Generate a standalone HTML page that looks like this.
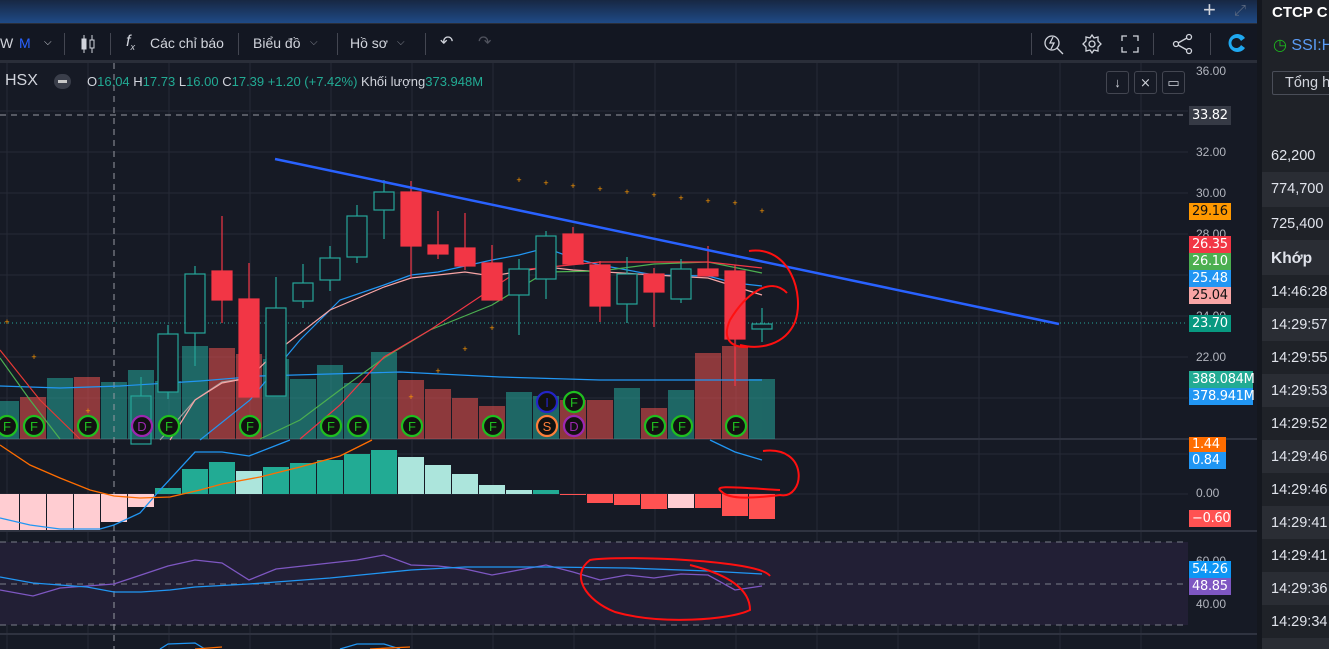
<!DOCTYPE html>
<html><head><meta charset="utf-8"><style>
*{margin:0;padding:0;box-sizing:border-box}
body{width:1329px;height:649px;overflow:hidden;background:#161a25;font-family:"Liberation Sans","Noto Sans CJK JP",sans-serif;position:relative}
.top{position:absolute;left:0;top:0;width:1257px;height:23px;background:linear-gradient(#172743,#1f4a86)}
.tb{position:absolute;left:0;top:23px;width:1257px;height:40px;background:#131722;border-top:1px solid #2a2e39;border-bottom:3px solid #2a2e39;color:#d1d4dc;font-size:14px}
.tb span{position:absolute;top:11px}
.sep{position:absolute;top:9px;width:1px;height:22px;background:#434651}
.rp{position:absolute;left:1257px;top:0;width:72px;height:649px;background:#2a2d34;color:#e0e3eb;font-size:14.5px}
.row{position:absolute;left:5px;width:67px;height:33px;padding:9px 0 0 9px}
.lbl{position:absolute;left:1189px;height:17px;font-size:13px;color:#fff;padding:1px 0 0 3px;font-family:"DejaVu Sans","Liberation Sans",sans-serif;letter-spacing:-0.3px}
.ax{position:absolute;left:1196px;font-size:12px;color:#b2b5be}
.btn{position:absolute;top:71px;width:23px;height:23px;border:1px solid #434651;border-radius:3px;color:#d1d4dc;font-size:13px;text-align:center;line-height:21px;background:#161a25}
</style></head><body>
<svg width="1257" height="649" style="position:absolute;left:0;top:0" xmlns="http://www.w3.org/2000/svg">
<rect x="0" y="63" width="1257" height="586" fill="#161a25"/>
<g stroke="#262a36" stroke-width="1">
<line x1="0" y1="111" x2="1188" y2="111"/><line x1="0" y1="152" x2="1188" y2="152"/><line x1="0" y1="193" x2="1188" y2="193"/><line x1="0" y1="234" x2="1188" y2="234"/><line x1="0" y1="275" x2="1188" y2="275"/><line x1="0" y1="316" x2="1188" y2="316"/><line x1="0" y1="357" x2="1188" y2="357"/><line x1="0" y1="398" x2="1188" y2="398"/>
<line x1="0" y1="454" x2="1188" y2="454"/><line x1="0" y1="494" x2="1188" y2="494"/>
<line x1="0" y1="564" x2="1188" y2="564"/><line x1="0" y1="604" x2="1188" y2="604"/>
<line x1="7" y1="63" x2="7" y2="649"/><line x1="88" y1="63" x2="88" y2="649"/><line x1="169" y1="63" x2="169" y2="649"/><line x1="250" y1="63" x2="250" y2="649"/><line x1="331" y1="63" x2="331" y2="649"/><line x1="412" y1="63" x2="412" y2="649"/><line x1="493" y1="63" x2="493" y2="649"/><line x1="574" y1="63" x2="574" y2="649"/><line x1="655" y1="63" x2="655" y2="649"/><line x1="736" y1="63" x2="736" y2="649"/><line x1="817" y1="63" x2="817" y2="649"/><line x1="898" y1="63" x2="898" y2="649"/><line x1="979" y1="63" x2="979" y2="649"/><line x1="1060" y1="63" x2="1060" y2="649"/><line x1="1141" y1="63" x2="1141" y2="649"/>
</g>
<g stroke="#2f3340" stroke-width="2"><line x1="0" y1="439" x2="1257" y2="439"/><line x1="0" y1="531" x2="1257" y2="531"/><line x1="0" y1="634" x2="1257" y2="634"/></g>
<rect x="0" y="542" width="1188" height="83" fill="#221f35"/>
<g stroke="#7b7e89" stroke-dasharray="6,5"><line x1="0" y1="542" x2="1188" y2="542"/><line x1="0" y1="584" x2="1188" y2="584"/><line x1="0" y1="625" x2="1188" y2="625"/><line x1="0" y1="115" x2="1188" y2="115" stroke="#9598a1"/></g>
<line x1="0" y1="323" x2="1188" y2="323" stroke="#26a69a" stroke-dasharray="1,3"/>
<g opacity="0.55">
<rect x="-7" y="401" width="26" height="38" fill="#26a69a"/><rect x="20" y="397" width="26" height="42" fill="#ef5350"/><rect x="47" y="378" width="26" height="61" fill="#26a69a"/><rect x="74" y="377" width="26" height="62" fill="#ef5350"/><rect x="101" y="382" width="26" height="57" fill="#26a69a"/><rect x="128" y="370" width="26" height="69" fill="#26a69a"/><rect x="155" y="381" width="26" height="58" fill="#26a69a"/><rect x="182" y="346" width="26" height="93" fill="#26a69a"/><rect x="209" y="348" width="26" height="91" fill="#ef5350"/><rect x="236" y="354" width="26" height="85" fill="#ef5350"/><rect x="263" y="359" width="26" height="80" fill="#26a69a"/><rect x="290" y="379" width="26" height="60" fill="#26a69a"/><rect x="317" y="365" width="26" height="74" fill="#26a69a"/><rect x="344" y="383" width="26" height="56" fill="#26a69a"/><rect x="371" y="352" width="26" height="87" fill="#26a69a"/><rect x="398" y="380" width="26" height="59" fill="#ef5350"/><rect x="425" y="389" width="26" height="50" fill="#ef5350"/><rect x="452" y="398" width="26" height="41" fill="#ef5350"/><rect x="479" y="406" width="26" height="33" fill="#ef5350"/><rect x="506" y="392" width="26" height="47" fill="#26a69a"/><rect x="533" y="396" width="26" height="43" fill="#26a69a"/><rect x="560" y="400" width="26" height="39" fill="#ef5350"/><rect x="587" y="400" width="26" height="39" fill="#ef5350"/><rect x="614" y="388" width="26" height="51" fill="#26a69a"/><rect x="641" y="408" width="26" height="31" fill="#ef5350"/><rect x="668" y="390" width="26" height="49" fill="#26a69a"/><rect x="695" y="353" width="26" height="86" fill="#ef5350"/><rect x="722" y="346" width="26" height="93" fill="#ef5350"/><rect x="749" y="379" width="26" height="60" fill="#26a69a"/>
</g>
<line x1="114" y1="63" x2="114" y2="649" stroke="#9598a1" stroke-dasharray="6,5"/>
<g fill="none" stroke-width="1.2">
<polyline stroke="#2196f3" points="0,386 60,388 120,386 200,381 260,376 400,372 500,377 600,380 700,380 762,380"/>
<polyline stroke="#e53935" points="0,350 40,400 80,439"/>
<polyline stroke="#4caf50" points="0,358 30,400 60,439"/>
<polyline stroke="#9e9e9e" points="160,440 195,400 222,382 249,378"/>
<polyline stroke="#2196f3" points="200,440 250,400 300,340 340,300 384,285 411,275 438,272 492,260 519,255 546,248 573,258 600,265 654,275 708,276 735,283 762,286"/>
<polyline stroke="#f8a5a5" points="170,440 195,400 222,383 249,378 276,352 330,310 384,287 411,278 465,272 492,276 546,267 573,270 654,275 708,278 762,295"/>
<polyline stroke="#4caf50" points="260,439 300,420 340,390 384,358 430,330 492,305 546,272 600,271 654,264 708,262 762,273"/>
<polyline stroke="#f23645" points="300,439 340,405 384,357 430,330 520,270 600,262 708,262 762,268"/>
</g>
<g stroke="#26a69a" stroke-width="1.2" fill="#161a25">
<line x1="141" y1="377" x2="141" y2="396"/><rect x="131" y="396" width="20" height="48" fill="none"/>
<line x1="168" y1="325" x2="168" y2="399"/><rect x="158" y="334" width="20" height="58"/>
<line x1="195" y1="266" x2="195" y2="366"/><rect x="185" y="274" width="20" height="59"/>
<line x1="276" y1="277" x2="276" y2="396"/><rect x="266" y="308" width="20" height="88"/>
<line x1="303" y1="264" x2="303" y2="308"/><rect x="293" y="283" width="20" height="18"/>
<line x1="330" y1="246" x2="330" y2="291"/><rect x="320" y="258" width="20" height="22"/>
<line x1="357" y1="205" x2="357" y2="263"/><rect x="347" y="216" width="20" height="41"/>
<line x1="384" y1="180" x2="384" y2="239"/><rect x="374" y="192" width="20" height="18"/>
<line x1="519" y1="259" x2="519" y2="335"/><rect x="509" y="269" width="20" height="26"/>
<line x1="546" y1="231" x2="546" y2="299"/><rect x="536" y="236" width="20" height="43"/>
<line x1="627" y1="257" x2="627" y2="323"/><rect x="617" y="274" width="20" height="30"/>
<line x1="681" y1="259" x2="681" y2="303"/><rect x="671" y="269" width="20" height="30"/>
<line x1="762" y1="308" x2="762" y2="342"/><rect x="752" y="324" width="20" height="5"/>
</g>
<g fill="#f23645" stroke="#f23645" stroke-width="1.2">
<line x1="222" y1="216" x2="222" y2="323"/><rect x="212" y="271" width="20" height="29"/>
<line x1="249" y1="263" x2="249" y2="397"/><rect x="239" y="299" width="20" height="98"/>
<line x1="411" y1="181" x2="411" y2="278"/><rect x="401" y="192" width="20" height="54"/>
<line x1="438" y1="211" x2="438" y2="259"/><rect x="428" y="245" width="20" height="9"/>
<line x1="465" y1="213" x2="465" y2="270"/><rect x="455" y="248" width="20" height="18"/>
<line x1="492" y1="245" x2="492" y2="300"/><rect x="482" y="263" width="20" height="37"/>
<line x1="573" y1="227" x2="573" y2="264"/><rect x="563" y="234" width="20" height="30"/>
<line x1="600" y1="261" x2="600" y2="322"/><rect x="590" y="265" width="20" height="41"/>
<line x1="654" y1="268" x2="654" y2="327"/><rect x="644" y="274" width="20" height="18"/>
<line x1="708" y1="246" x2="708" y2="276"/><rect x="698" y="269" width="20" height="7"/>
<line x1="735" y1="265" x2="735" y2="386"/><rect x="725" y="271" width="20" height="68"/>
</g>
<line x1="275" y1="159" x2="1059" y2="324" stroke="#2962ff" stroke-width="2.5"/>
<g fill="#ff9800" font-size="9" font-family="Liberation Sans" text-anchor="middle">
<text x="7" y="325">+</text><text x="34" y="360">+</text><text x="88" y="414">+</text><text x="411" y="400">+</text><text x="438" y="374">+</text><text x="465" y="352">+</text><text x="492" y="331">+</text><text x="519" y="183">+</text><text x="546" y="186">+</text><text x="573" y="189">+</text><text x="600" y="192">+</text><text x="627" y="195">+</text><text x="654" y="198">+</text><text x="681" y="201">+</text><text x="708" y="204">+</text><text x="735" y="206">+</text><text x="762" y="214">+</text>
</g>
<g font-size="13" font-family="Liberation Sans" text-anchor="middle" stroke-width="2.2">
<g fill="#111" stroke="#1fbf1f"><circle cx="7" cy="426" r="10"/><circle cx="34" cy="426" r="10"/><circle cx="88" cy="426" r="10"/><circle cx="169" cy="426" r="10"/><circle cx="250" cy="426" r="10"/><circle cx="331" cy="426" r="10"/><circle cx="358" cy="426" r="10"/><circle cx="412" cy="426" r="10"/><circle cx="493" cy="426" r="10"/><circle cx="655" cy="426" r="10"/><circle cx="682" cy="426" r="10"/><circle cx="736" cy="426" r="10"/><circle cx="574" cy="402" r="10"/></g>
<g fill="#111" stroke="#9c27b0"><circle cx="142" cy="426" r="10"/><circle cx="574" cy="426" r="10"/></g>
<circle cx="547" cy="402" r="10" fill="#111" stroke="#2424c8"/><circle cx="547" cy="426" r="10" fill="#111" stroke="#ff7f3a"/>
<g fill="#1fbf1f" stroke="none"><text x="7" y="431">F</text><text x="34" y="431">F</text><text x="88" y="431">F</text><text x="169" y="431">F</text><text x="250" y="431">F</text><text x="331" y="431">F</text><text x="358" y="431">F</text><text x="412" y="431">F</text><text x="493" y="431">F</text><text x="655" y="431">F</text><text x="682" y="431">F</text><text x="736" y="431">F</text><text x="574" y="407">F</text></g>
<g fill="#9c27b0" stroke="none"><text x="142" y="431">D</text><text x="574" y="431">D</text></g>
<text x="547" y="407" fill="#2424c8" stroke="none">I</text><text x="547" y="431" fill="#ff7f3a" stroke="none">S</text>
</g>
<g>
<g fill="#ffcdd2"><rect x="0" y="494" width="19" height="36"/><rect x="20" y="494" width="26" height="36"/><rect x="47" y="494" width="26" height="36"/><rect x="74" y="494" width="26" height="36"/><rect x="101" y="494" width="26" height="28"/><rect x="128" y="494" width="26" height="13"/><rect x="668" y="494" width="26" height="14"/></g>
<g fill="#22ab94"><rect x="155" y="488" width="26" height="6"/><rect x="182" y="469" width="26" height="25"/><rect x="209" y="462" width="26" height="32"/><rect x="263" y="467" width="26" height="27"/><rect x="290" y="463" width="26" height="31"/><rect x="317" y="460" width="26" height="34"/><rect x="344" y="454" width="26" height="40"/><rect x="371" y="450" width="26" height="44"/><rect x="533" y="490" width="26" height="4"/></g>
<g fill="#ace5dc"><rect x="236" y="471" width="26" height="23"/><rect x="398" y="457" width="26" height="37"/><rect x="425" y="465" width="26" height="29"/><rect x="452" y="474" width="26" height="20"/><rect x="479" y="485" width="26" height="9"/><rect x="506" y="490" width="26" height="4"/></g>
<g fill="#ff5252"><rect x="560" y="494" width="26" height="1"/><rect x="587" y="494" width="26" height="9"/><rect x="614" y="494" width="26" height="11"/><rect x="641" y="494" width="26" height="15"/><rect x="695" y="494" width="26" height="14"/><rect x="722" y="494" width="26" height="22"/><rect x="749" y="494" width="26" height="25"/></g>
</g>
<g fill="none" stroke-width="1.3">
<polyline stroke="#2196f3" points="0,518 30,525 60,529 100,529 114,525 140,513 160,490 195,452 222,452 249,456 290,440"/>
<polyline stroke="#2196f3" points="710,440 735,452 762,460"/>
<polyline stroke="#ff6d00" points="0,445 30,465 60,478 90,490 114,496 140,498 170,497 200,490 222,484 260,477 300,467 340,456 372,440"/>
<polyline stroke="#7e57c2" points="0,590 33,596 60,588 87,586 114,584 141,575 168,566 195,560 222,563 249,580 276,569 303,566 330,563 357,560 384,555 411,565 438,566 465,569 492,575 519,570 546,565 573,572 600,580 627,575 654,578 681,574 708,575 735,590 762,586"/>
<polyline stroke="#2196f3" points="0,577 33,583 87,587 114,592 141,592 170,590 195,587 249,584 330,578 411,570 465,567 546,567 627,568 708,571 762,574"/>
<polyline stroke="#2196f3" points="160,649 168,644 195,643 205,649"/>
<polyline stroke="#ff6d00" points="195,649 222,647"/>
<polyline stroke="#2196f3" points="340,649 357,644 384,644 400,649"/>
<polyline stroke="#ff6d00" points="370,649 410,647"/>
</g>
<g fill="none" stroke="#ff1010" stroke-width="2">
<path d="M749,251 C790,245 805,295 795,322 C785,345 760,350 740,345"/>
<path d="M787,293 C770,275 745,295 730,320 C722,338 730,348 748,347"/>
<path d="M763,451 C810,445 805,500 780,495 C755,498 730,500 722,492 C712,485 730,487 780,490"/>
<path d="M770,576 C760,560 620,555 590,560 C570,575 585,600 615,612 C660,625 730,620 750,610 C750,590 730,575 690,565"/>
</g>
</svg>

<div class="top"></div>
<div style="position:absolute;left:1203px;top:-3px;color:#d1d4dc;font-size:22px">+</div>
<div style="position:absolute;left:1234px;top:2px;color:#5d6a80;font-size:15px">⤢</div>
<div class="tb">
<span style="left:0">W</span><span style="left:19px;color:#2962ff">M</span><span style="left:44px;font-size:10px;top:13px">⌵</span>
<div class="sep" style="left:64px"></div>
<svg style="position:absolute;left:80px;top:10px" width="16" height="20"><g stroke="#d1d4dc" fill="none"><line x1="4" y1="1" x2="4" y2="19"/><rect x="2" y="5" width="4" height="10" fill="#d1d4dc"/><line x1="12" y1="1" x2="12" y2="19"/><rect x="10" y="6" width="4" height="8" fill="#131722"/></g></svg>
<div class="sep" style="left:110px"></div>
<span style="left:126px;font-style:italic;font-size:16px;top:9px">f<sub style="font-size:9px">x</sub></span>
<span style="left:150px">Các chỉ báo</span>
<div class="sep" style="left:238px"></div>
<span style="left:253px">Biểu đồ</span><span style="left:310px;font-size:10px;top:13px;color:#868993">⌵</span>
<div class="sep" style="left:337px"></div>
<span style="left:350px">Hồ sơ</span><span style="left:397px;font-size:10px;top:13px;color:#868993">⌵</span>
<div class="sep" style="left:425px"></div>
<span style="left:440px;font-size:16px;top:8px">↶</span><span style="left:478px;font-size:16px;top:8px;color:#50535e">↷</span>
<div class="sep" style="left:1031px"></div>
<svg style="position:absolute;left:1043px;top:9px" width="22" height="22"><g stroke="#d1d4dc" fill="none" stroke-width="1.3"><circle cx="9" cy="10" r="7"/><line x1="14" y1="15" x2="20" y2="21"/><path d="M10,4 L7,10 L11,10 L8,16"/></g></svg>
<svg style="position:absolute;left:1081px;top:9px" width="22" height="22"><g stroke="#d1d4dc" fill="none" stroke-width="1.3"><circle cx="11" cy="11" r="3"/><path d="M11,2 L13,5 L17,4 L17,8 L20,11 L17,14 L17,18 L13,17 L11,20 L9,17 L5,18 L5,14 L2,11 L5,8 L5,4 L9,5 Z"/></g></svg>
<svg style="position:absolute;left:1121px;top:11px" width="18" height="18"><g stroke="#d1d4dc" fill="none" stroke-width="1.3"><path d="M1,6 V1 H6 M12,1 H17 V6 M17,12 V17 H12 M6,17 H1 V12"/></g></svg>
<div class="sep" style="left:1153px"></div>
<svg style="position:absolute;left:1172px;top:9px" width="22" height="22"><g stroke="#d1d4dc" fill="none" stroke-width="1.3"><circle cx="17" cy="4" r="2.5"/><circle cx="4" cy="11" r="2.5"/><circle cx="17" cy="18" r="2.5"/><line x1="6" y1="10" x2="15" y2="5"/><line x1="6" y1="12" x2="15" y2="17"/></g></svg>
<div class="sep" style="left:1210px"></div>
<svg style="position:absolute;left:1226px;top:8px" width="22" height="22"><path d="M19,6 A9,9 0 1 0 19,16 L15,13 A5,5 0 1 1 15,9 Z" fill="#1fa8f0"/></svg>
</div>

<div style="position:absolute;left:5px;top:72px;color:#d1d4dc;font-size:16px">HSX</div>
<div style="position:absolute;left:54px;top:74px;width:17px;height:15px;border-radius:8px;background:#3a3e4a"><div style="margin:6px 4px;height:3px;background:#c8c8c8"></div></div>
<div style="position:absolute;left:87px;top:74px;font-size:13px;color:#d1d4dc;white-space:nowrap">O<span style="color:#22ab94">16.04</span> H<span style="color:#22ab94">17.73</span> L<span style="color:#22ab94">16.00</span> C<span style="color:#22ab94">17.39</span> <span style="color:#22ab94">+1.20 (+7.42%)</span> Khối lượng<span style="color:#22ab94">373.948M</span></div>
<div class="btn" style="left:1106px">↓</div><div class="btn" style="left:1134px">⨯</div><div class="btn" style="left:1162px">▭</div>

<div class="ax" style="top:64px">36.00</div><div class="ax" style="top:145px">32.00</div><div class="ax" style="top:186px">30.00</div><div class="ax" style="top:227px">28.00</div><div class="ax" style="top:309px">24.00</div><div class="ax" style="top:350px">22.00</div><div class="ax" style="top:486px">0.00</div><div class="ax" style="top:554px">60.00</div><div class="ax" style="top:597px">40.00</div>
<div class="lbl" style="top:106px;width:42px;background:#363a45;height:19px;padding-top:2px">33.82</div>
<div class="lbl" style="top:203px;width:42px;background:#ff9800;color:#111">29.16</div>
<div class="lbl" style="top:236px;width:42px;background:#f23645">26.35</div>
<div class="lbl" style="top:253px;width:42px;background:#4caf50">26.10</div>
<div class="lbl" style="top:270px;width:42px;background:#2196f3">25.48</div>
<div class="lbl" style="top:287px;width:42px;background:#f8a5a5;color:#111">25.04</div>
<div class="lbl" style="top:315px;width:42px;background:#089981">23.70</div>
<div class="lbl" style="top:371px;width:64px;background:#22ab94">388.084M</div>
<div class="lbl" style="top:388px;width:64px;background:#2196f3">378.941M</div>
<div class="lbl" style="top:437px;width:37px;background:#ff6d00;height:15px;padding-top:0">1.44</div>
<div class="lbl" style="top:452px;width:37px;background:#2196f3">0.84</div>
<div class="lbl" style="top:510px;width:42px;background:#ff5252">−0.60</div>
<div class="lbl" style="top:561px;width:42px;background:#0e96f5">54.26</div>
<div class="lbl" style="top:578px;width:42px;background:#7e57c2">48.85</div>

<div class="rp">
<div style="position:absolute;left:0;top:0;width:72px;height:139px;background:#1f2228"></div>
<div style="position:absolute;left:15px;top:4px;font-weight:bold;font-size:15px;color:#fff;white-space:nowrap">CTCP C</div>
<div style="position:absolute;left:16px;top:35px;font-size:16px;color:#5b9cf5;white-space:nowrap"><span style="color:#1db51d">◷</span> SSI:H</div>
<div style="position:absolute;left:15px;top:71px;width:60px;height:24px;border:1px solid #4a4e58;border-radius:2px;color:#d1d4dc;padding:3px 0 0 12px;white-space:nowrap">Tổng h</div>
<div class="row" style="top:139px;background:#1f2228">62,200</div>
<div class="row" style="top:172px">774,700</div>
<div class="row" style="top:207px;background:#1f2228">725,400</div>
<div class="row" style="top:241px;font-weight:bold;font-size:15.5px">Khớp</div>
<div class="row" style="top:275px;background:#1f2228">14:46:28</div>
<div class="row" style="top:308px">14:29:57</div>
<div class="row" style="top:341px;background:#1f2228">14:29:55</div>
<div class="row" style="top:374px">14:29:53</div>
<div class="row" style="top:407px;background:#1f2228">14:29:52</div>
<div class="row" style="top:440px">14:29:46</div>
<div class="row" style="top:473px;background:#1f2228">14:29:46</div>
<div class="row" style="top:506px">14:29:41</div>
<div class="row" style="top:539px;background:#1f2228">14:29:41</div>
<div class="row" style="top:572px">14:29:36</div>
<div class="row" style="top:605px;background:#1f2228">14:29:34</div>
<div style="position:absolute;left:0;top:0;width:5px;height:649px;background:#14171e"></div>
</div>
</body></html>
